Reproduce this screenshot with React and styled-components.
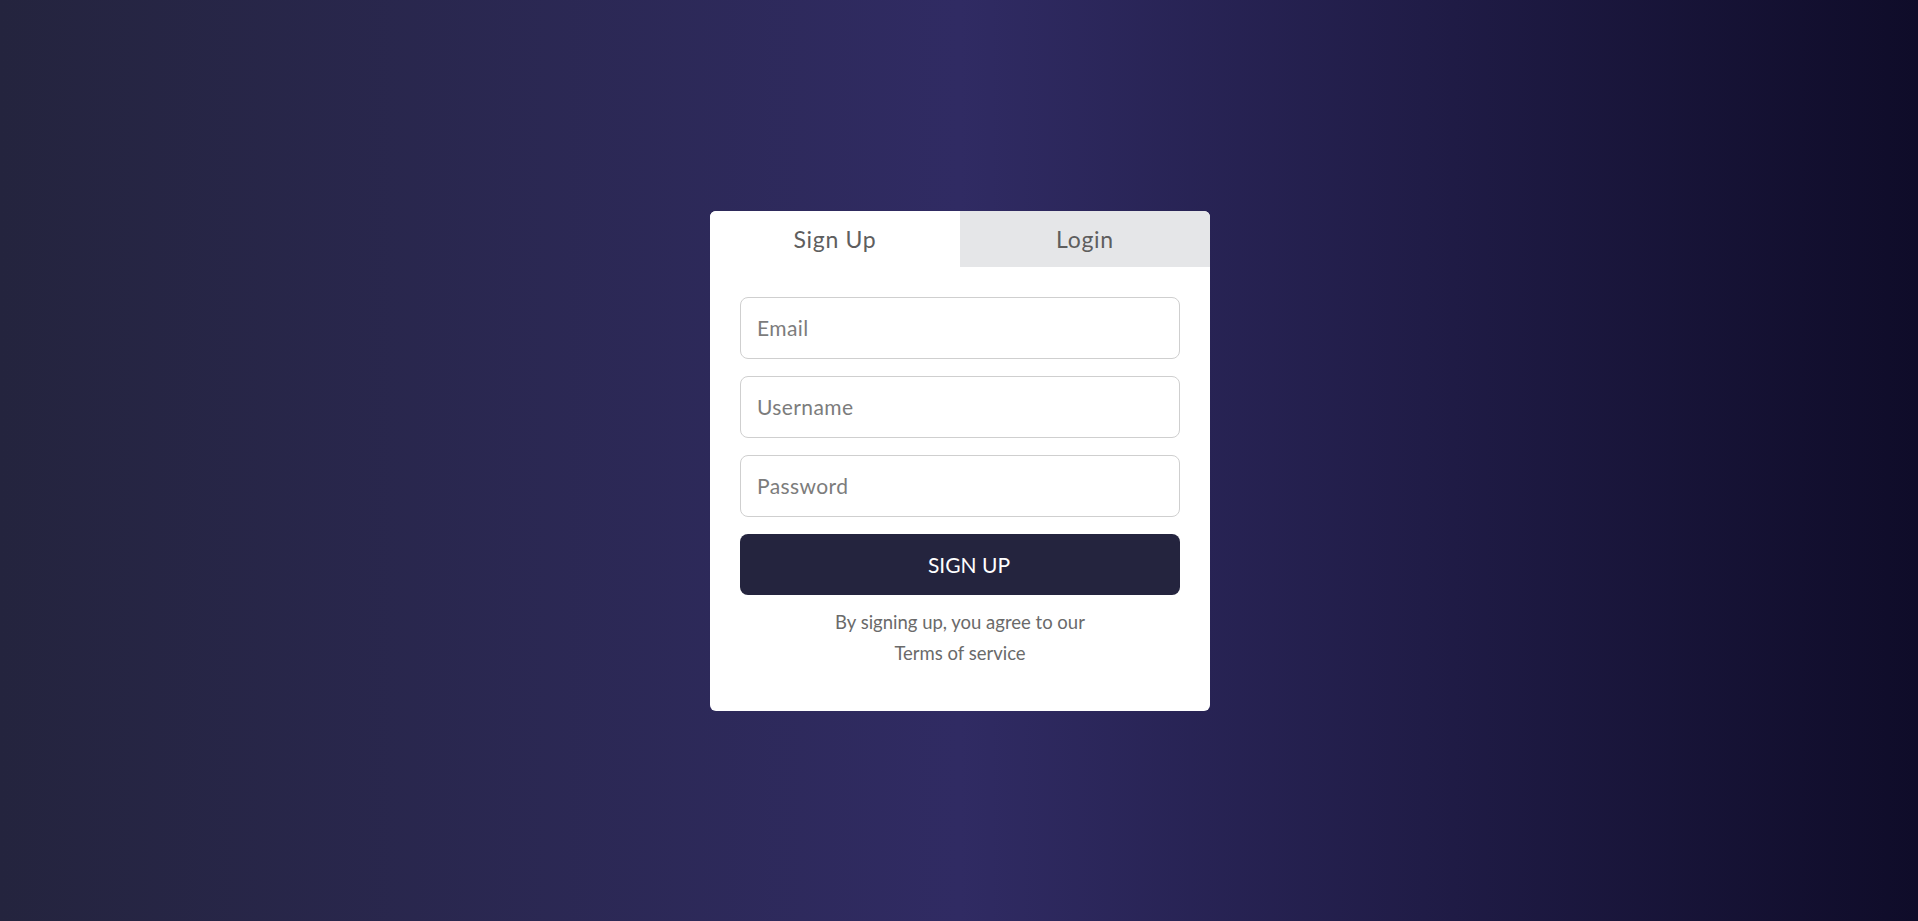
import React, { useState } from "react"
import styled, { createGlobalStyle } from "styled-components"

const GlobalStyle = createGlobalStyle`
* {
    box-sizing: border-box;
}
body {
    margin: 0;
    font-family: Lato, "Open Sans", sans-serif;
}
`

const App = () => {
    const [tab, setTab] = useState("signup")

    return (
        <Page>
            <GlobalStyle />
            <Card>
                <Tabs>
                    <Tab active={tab === "signup"} onClick={() => setTab("signup")}>Sign Up</Tab>
                    <Tab active={tab === "login"} onClick={() => setTab("login")}>Login</Tab>
                </Tabs>
                <Form onSubmit={e => e.preventDefault()}>
                    <Fields>
                        <Field type="email" name="email" placeholder="Email" />
                        <Field type="text" name="username" placeholder="Username" />
                        <Field type="password" name="password" placeholder="Password" />
                        <Submit type="submit">SIGN UP</Submit>
                    </Fields>
                    <Note>
                        By signing up, you agree to our
                        <br />
                        Terms of service
                    </Note>
                </Form>
            </Card>
        </Page>
    )
}

const Page = styled.main`
min-height: 100vh;
display: flex;
align-items: center;
justify-content: center;
padding-left: 2px;
background: linear-gradient(to right, #24243e, #302b63, #0f0c29);
`

const Card = styled.section`
width: 500px;
height: 500px;
background: #fff;
border-radius: 6px;
overflow: hidden;
`

const Tabs = styled.nav`
display: grid;
grid-template-columns: 1fr 1fr;
height: 56px;
`

const Tab = styled.button`
border: none;
margin: 0;
padding: 0;
font-family: inherit;
font-size: 23px;
letter-spacing: 0.7px;
color: #5e5e5e;
background: ${p => (p.active ? "#fff" : "#e5e6e8")};
cursor: pointer;
`

const Form = styled.form`
padding: 30px 30px 0;
`

const Fields = styled.div`
display: flex;
flex-direction: column;
gap: 17px;
`

const Field = styled.input`
height: 62px;
border: 1px solid #cfcfcf;
border-radius: 8px;
padding: 0 16px;
font-family: inherit;
font-size: 21px;
letter-spacing: 0.4px;
color: #444;
outline: none;
&::placeholder {
    color: #7c7c7c;
}
`

const Submit = styled.button`
height: 61px;
border: none;
border-radius: 8px;
background: #24243e;
color: #fff;
font-family: inherit;
font-size: 21px;
padding-left: 24px;
cursor: pointer;
`

const Note = styled.p`
margin: 12px 0 0;
text-align: center;
font-size: 18.5px;
line-height: 31px;
color: #6a6a6a;
`

export default App
